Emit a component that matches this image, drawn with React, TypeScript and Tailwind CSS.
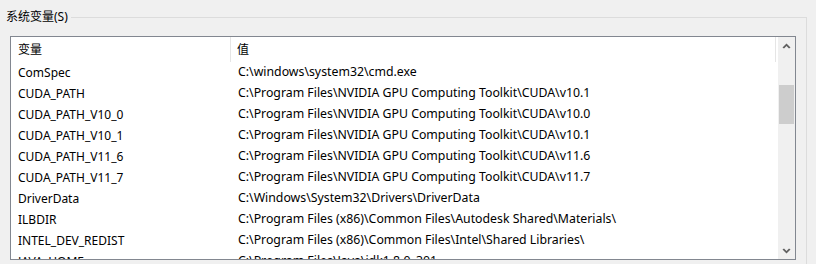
const rows: [string, string][] = [
  ["ComSpec", "C:\\windows\\system32\\cmd.exe"],
  ["CUDA_PATH", "C:\\Program Files\\NVIDIA GPU Computing Toolkit\\CUDA\\v10.1"],
  ["CUDA_PATH_V10_0", "C:\\Program Files\\NVIDIA GPU Computing Toolkit\\CUDA\\v10.0"],
  ["CUDA_PATH_V10_1", "C:\\Program Files\\NVIDIA GPU Computing Toolkit\\CUDA\\v10.1"],
  ["CUDA_PATH_V11_6", "C:\\Program Files\\NVIDIA GPU Computing Toolkit\\CUDA\\v11.6"],
  ["CUDA_PATH_V11_7", "C:\\Program Files\\NVIDIA GPU Computing Toolkit\\CUDA\\v11.7"],
  ["DriverData", "C:\\Windows\\System32\\Drivers\\DriverData"],
  ["ILBDIR", "C:\\Program Files (x86)\\Common Files\\Autodesk Shared\\Materials\\"],
  ["INTEL_DEV_REDIST", "C:\\Program Files (x86)\\Common Files\\Intel\\Shared Libraries\\"],
  ["JAVA_HOME", "C:\\Program Files\\Java\\jdk1.8.0_301"],
];

export default function App() {
  return (
    <div
      className="w-[816px] h-[264px] overflow-hidden bg-[#f0f0f0] text-black text-[12px]"
      style={{ fontFamily: '"Noto Sans", "Noto Sans CJK SC", sans-serif' }}
    >
      <fieldset className="mt-[9px] w-[807px] h-[300px] border-t border-r border-[#dcdcdc] pr-[10px] box-border">
        <legend className="pl-[6px] pr-[3px] leading-[16px]">系统变量(S)</legend>

        {/* list view */}
        <div className="ml-[10px] mt-[11px] w-[786px] h-[224px] border border-[#828790] bg-white flex overflow-hidden">
          <div className="flex-1 flex flex-col overflow-hidden">
            <div className="h-[25px] shrink-0 flex items-center">
              <div className="w-[220px] h-full pl-[7px] flex items-center border-r border-[#e5e5e5] my-[1px]">变量</div>
              <div className="w-[545px] h-full pl-[6px] flex items-center border-r border-[#e5e5e5]">值</div>
            </div>
            {rows.map(([name, value]) => (
              <div key={name} className="h-[21px] shrink-0 flex items-center whitespace-nowrap">
                <div className="w-[221px] pl-[7px]">{name}</div>
                <div className="pl-[6px] text-[12.3px]">{value}</div>
              </div>
            ))}
          </div>

          {/* scrollbar */}
          <div className="w-[17px] bg-[#f0f0f0] flex flex-col items-center">
            <div className="h-[17px] w-full flex items-center justify-center">
              <svg width="9" height="6" viewBox="0 0 9 6">
                <path d="M4.5 0.5 L8.5 4.5 L7 5.5 L4.5 3 L2 5.5 L0.5 4.5 Z" fill="#606060" />
              </svg>
            </div>
            <div className="mt-[31px] w-[15px] h-[39px] bg-[#cdcdcd]" />
            <div className="flex-1" />
            <div className="h-[17px] w-full flex items-center justify-center">
              <svg width="9" height="6" viewBox="0 0 9 6">
                <path d="M4.5 5.5 L8.5 1.5 L7 0.5 L4.5 3 L2 0.5 L0.5 1.5 Z" fill="#606060" />
              </svg>
            </div>
          </div>
        </div>
      </fieldset>
    </div>
  );
}
